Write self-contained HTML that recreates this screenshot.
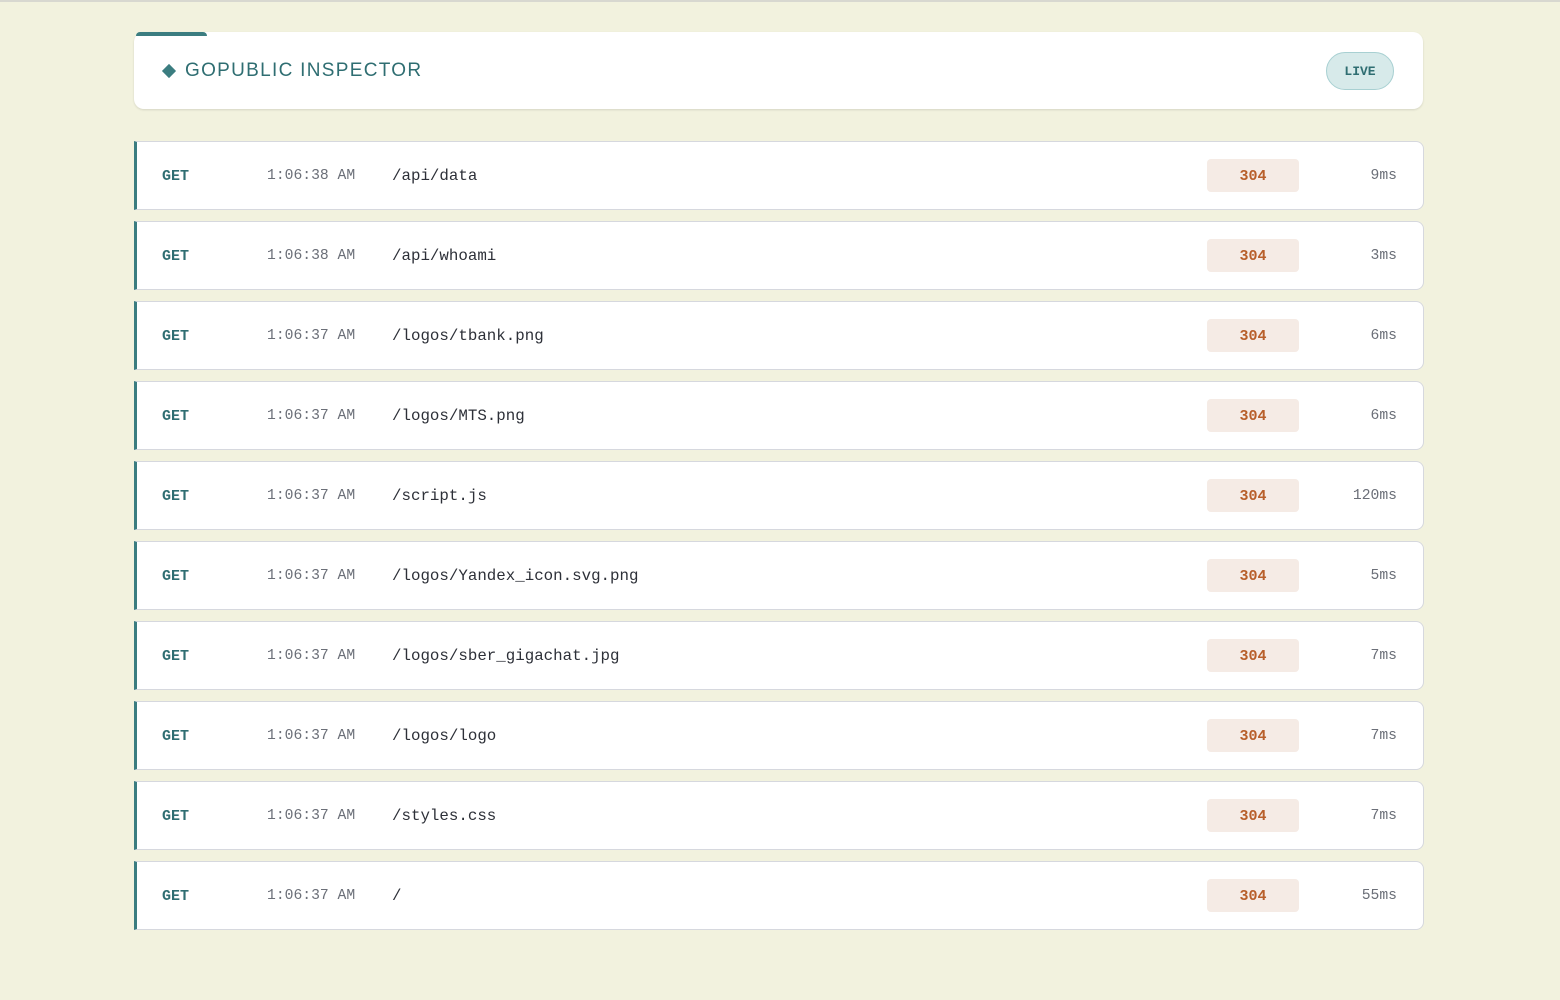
<!DOCTYPE html>
<html><head><style>
body{margin:0;width:1560px;height:1000px;background:#f2f2de;font-family:"Liberation Sans",sans-serif;position:relative;overflow:hidden}
.topline{position:absolute;left:0;top:0;width:1560px;height:2px;background:#d8d8d0}
.hdr{position:absolute;left:134px;top:32px;width:1289px;height:77px;background:#fff;border-radius:10px;box-shadow:0 1px 2px rgba(0,0,0,.12)}
.acc{position:absolute;left:136px;top:32px;width:71px;height:4px;background:#3b7d80;border-radius:4px 4px 0 0}
.title{position:absolute;left:51px;top:28px;font-size:19px;letter-spacing:1.3px;color:#2f6e72}
.dia{position:absolute;left:164px;top:66px;width:10px;height:10px;background:#3b7d80;transform:rotate(45deg)}
.live{position:absolute;left:1192px;top:20px;width:66px;height:36px;border:1px solid #a8d0d2;background:#d7eaea;border-radius:19px;font-family:"Liberation Mono",monospace;font-weight:bold;font-size:13px;color:#2f6e72;text-align:center;line-height:38px}
.row{position:absolute;left:134px;width:1286px;height:67px;background:#fff;border:1px solid #d6d8de;border-left:3px solid #3b7d80;border-radius:0 8px 8px 0;font-family:"Liberation Mono",monospace}
.row span{position:absolute;top:1px;line-height:67px}
.m{left:25px;font-weight:bold;font-size:15px;color:#2f6e72}
.t{left:130px;font-size:14.7px;color:#6b6f78}
.p{left:255px;font-size:15.8px;color:#2d3038}
.b{left:1070px;top:17px!important;width:92px;height:33px;line-height:35px!important;background:#f5ebe5;border-radius:4px;text-align:center;font-weight:bold;font-size:15px;color:#b85f2a}
.d{right:26px;font-size:14.7px;color:#6b6f78}
</style></head><body>
<div class="topline"></div>
<div class="hdr"><div class="title">GOPUBLIC INSPECTOR</div><div class="live">LIVE</div></div>
<div class="acc"></div>
<div class="dia"></div>
<div class="row" style="top:141px"><span class="m">GET</span><span class="t">1:06:38 AM</span><span class="p">/api/data</span><span class="b">304</span><span class="d">9ms</span></div>
<div class="row" style="top:221px"><span class="m">GET</span><span class="t">1:06:38 AM</span><span class="p">/api/whoami</span><span class="b">304</span><span class="d">3ms</span></div>
<div class="row" style="top:301px"><span class="m">GET</span><span class="t">1:06:37 AM</span><span class="p">/logos/tbank.png</span><span class="b">304</span><span class="d">6ms</span></div>
<div class="row" style="top:381px"><span class="m">GET</span><span class="t">1:06:37 AM</span><span class="p">/logos/MTS.png</span><span class="b">304</span><span class="d">6ms</span></div>
<div class="row" style="top:461px"><span class="m">GET</span><span class="t">1:06:37 AM</span><span class="p">/script.js</span><span class="b">304</span><span class="d">120ms</span></div>
<div class="row" style="top:541px"><span class="m">GET</span><span class="t">1:06:37 AM</span><span class="p">/logos/Yandex_icon.svg.png</span><span class="b">304</span><span class="d">5ms</span></div>
<div class="row" style="top:621px"><span class="m">GET</span><span class="t">1:06:37 AM</span><span class="p">/logos/sber_gigachat.jpg</span><span class="b">304</span><span class="d">7ms</span></div>
<div class="row" style="top:701px"><span class="m">GET</span><span class="t">1:06:37 AM</span><span class="p">/logos/logo</span><span class="b">304</span><span class="d">7ms</span></div>
<div class="row" style="top:781px"><span class="m">GET</span><span class="t">1:06:37 AM</span><span class="p">/styles.css</span><span class="b">304</span><span class="d">7ms</span></div>
<div class="row" style="top:861px"><span class="m">GET</span><span class="t">1:06:37 AM</span><span class="p">/</span><span class="b">304</span><span class="d">55ms</span></div>
</body></html>
